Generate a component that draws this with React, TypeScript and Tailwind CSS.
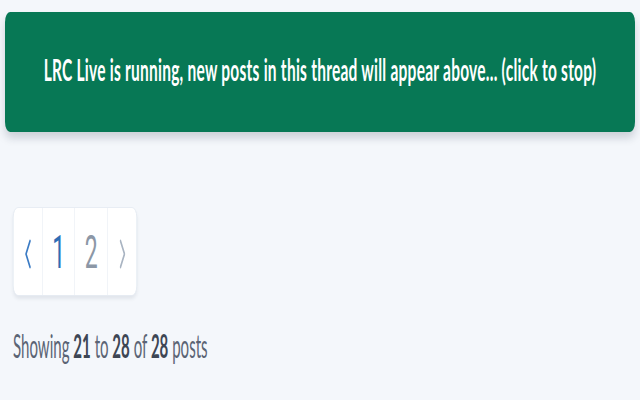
function Chevron({ dir, color }: { dir: 'left' | 'right'; color: string }) {
  return (
    <svg width="12" height="30" viewBox="0 0 12 30" fill="none" className="mt-[4px]">
      <polyline
        points={dir === 'left' ? '10,2 2,15 10,28' : '2,2 10,15 2,28'}
        stroke={color}
        strokeWidth="3"
        strokeLinecap="round"
        strokeLinejoin="round"
      />
    </svg>
  );
}

export default function App() {
  return (
    <div className="w-[640px] h-[400px] overflow-hidden bg-[#f4f7fb] font-['Lato',sans-serif]">
      {/* page is drawn at double width and squeezed horizontally, as in the capture */}
      <div className="w-[1280px] origin-top-left scale-x-50">
        {/* live banner */}
        <div className="mx-[10px] mt-[12px] h-[120px] rounded-[10px] bg-[#077855] shadow-[0_6px_12px_rgba(30,41,59,0.18)] flex items-center justify-center">
          <span className="text-white font-bold text-[31px] tracking-[0.5px] leading-none pb-[6px]">
            LRC Live is running, new posts in this thread will appear above... (click to stop)
          </span>
        </div>

        {/* pagination */}
        <div className="mt-[75px] ml-[26px] flex h-[89px] w-fit rounded-[10px] border border-[#e2e8f0] bg-white shadow-[0_3px_5px_rgba(30,41,59,0.08)] font-['Roboto',sans-serif]">
          <div className="w-[58px] flex items-center justify-center">
            <Chevron dir="left" color="#3b7bc4" />
          </div>
          <div className="w-[64px] flex items-center justify-center border-l border-[#e2e8f0] text-[#2f6db5] text-[46px] leading-none">1</div>
          <div className="w-[66px] flex items-center justify-center border-l border-[#e2e8f0] text-[#8c97a6] text-[46px] leading-none">2</div>
          <div className="w-[58px] flex items-center justify-center border-l border-[#e2e8f0]">
            <Chevron dir="right" color="#a9b4c2" />
          </div>
        </div>

        {/* summary */}
        <p className="mt-[27px] ml-[26px] w-fit origin-left scale-x-[0.94] text-[32px] leading-[45px] text-[#5b6474]">
          Showing <span className="font-bold text-[#3d4654]">21</span> to{' '}
          <span className="font-bold text-[#3d4654]">28</span> of{' '}
          <span className="font-bold text-[#3d4654]">28</span> posts
        </p>
      </div>
    </div>
  );
}
